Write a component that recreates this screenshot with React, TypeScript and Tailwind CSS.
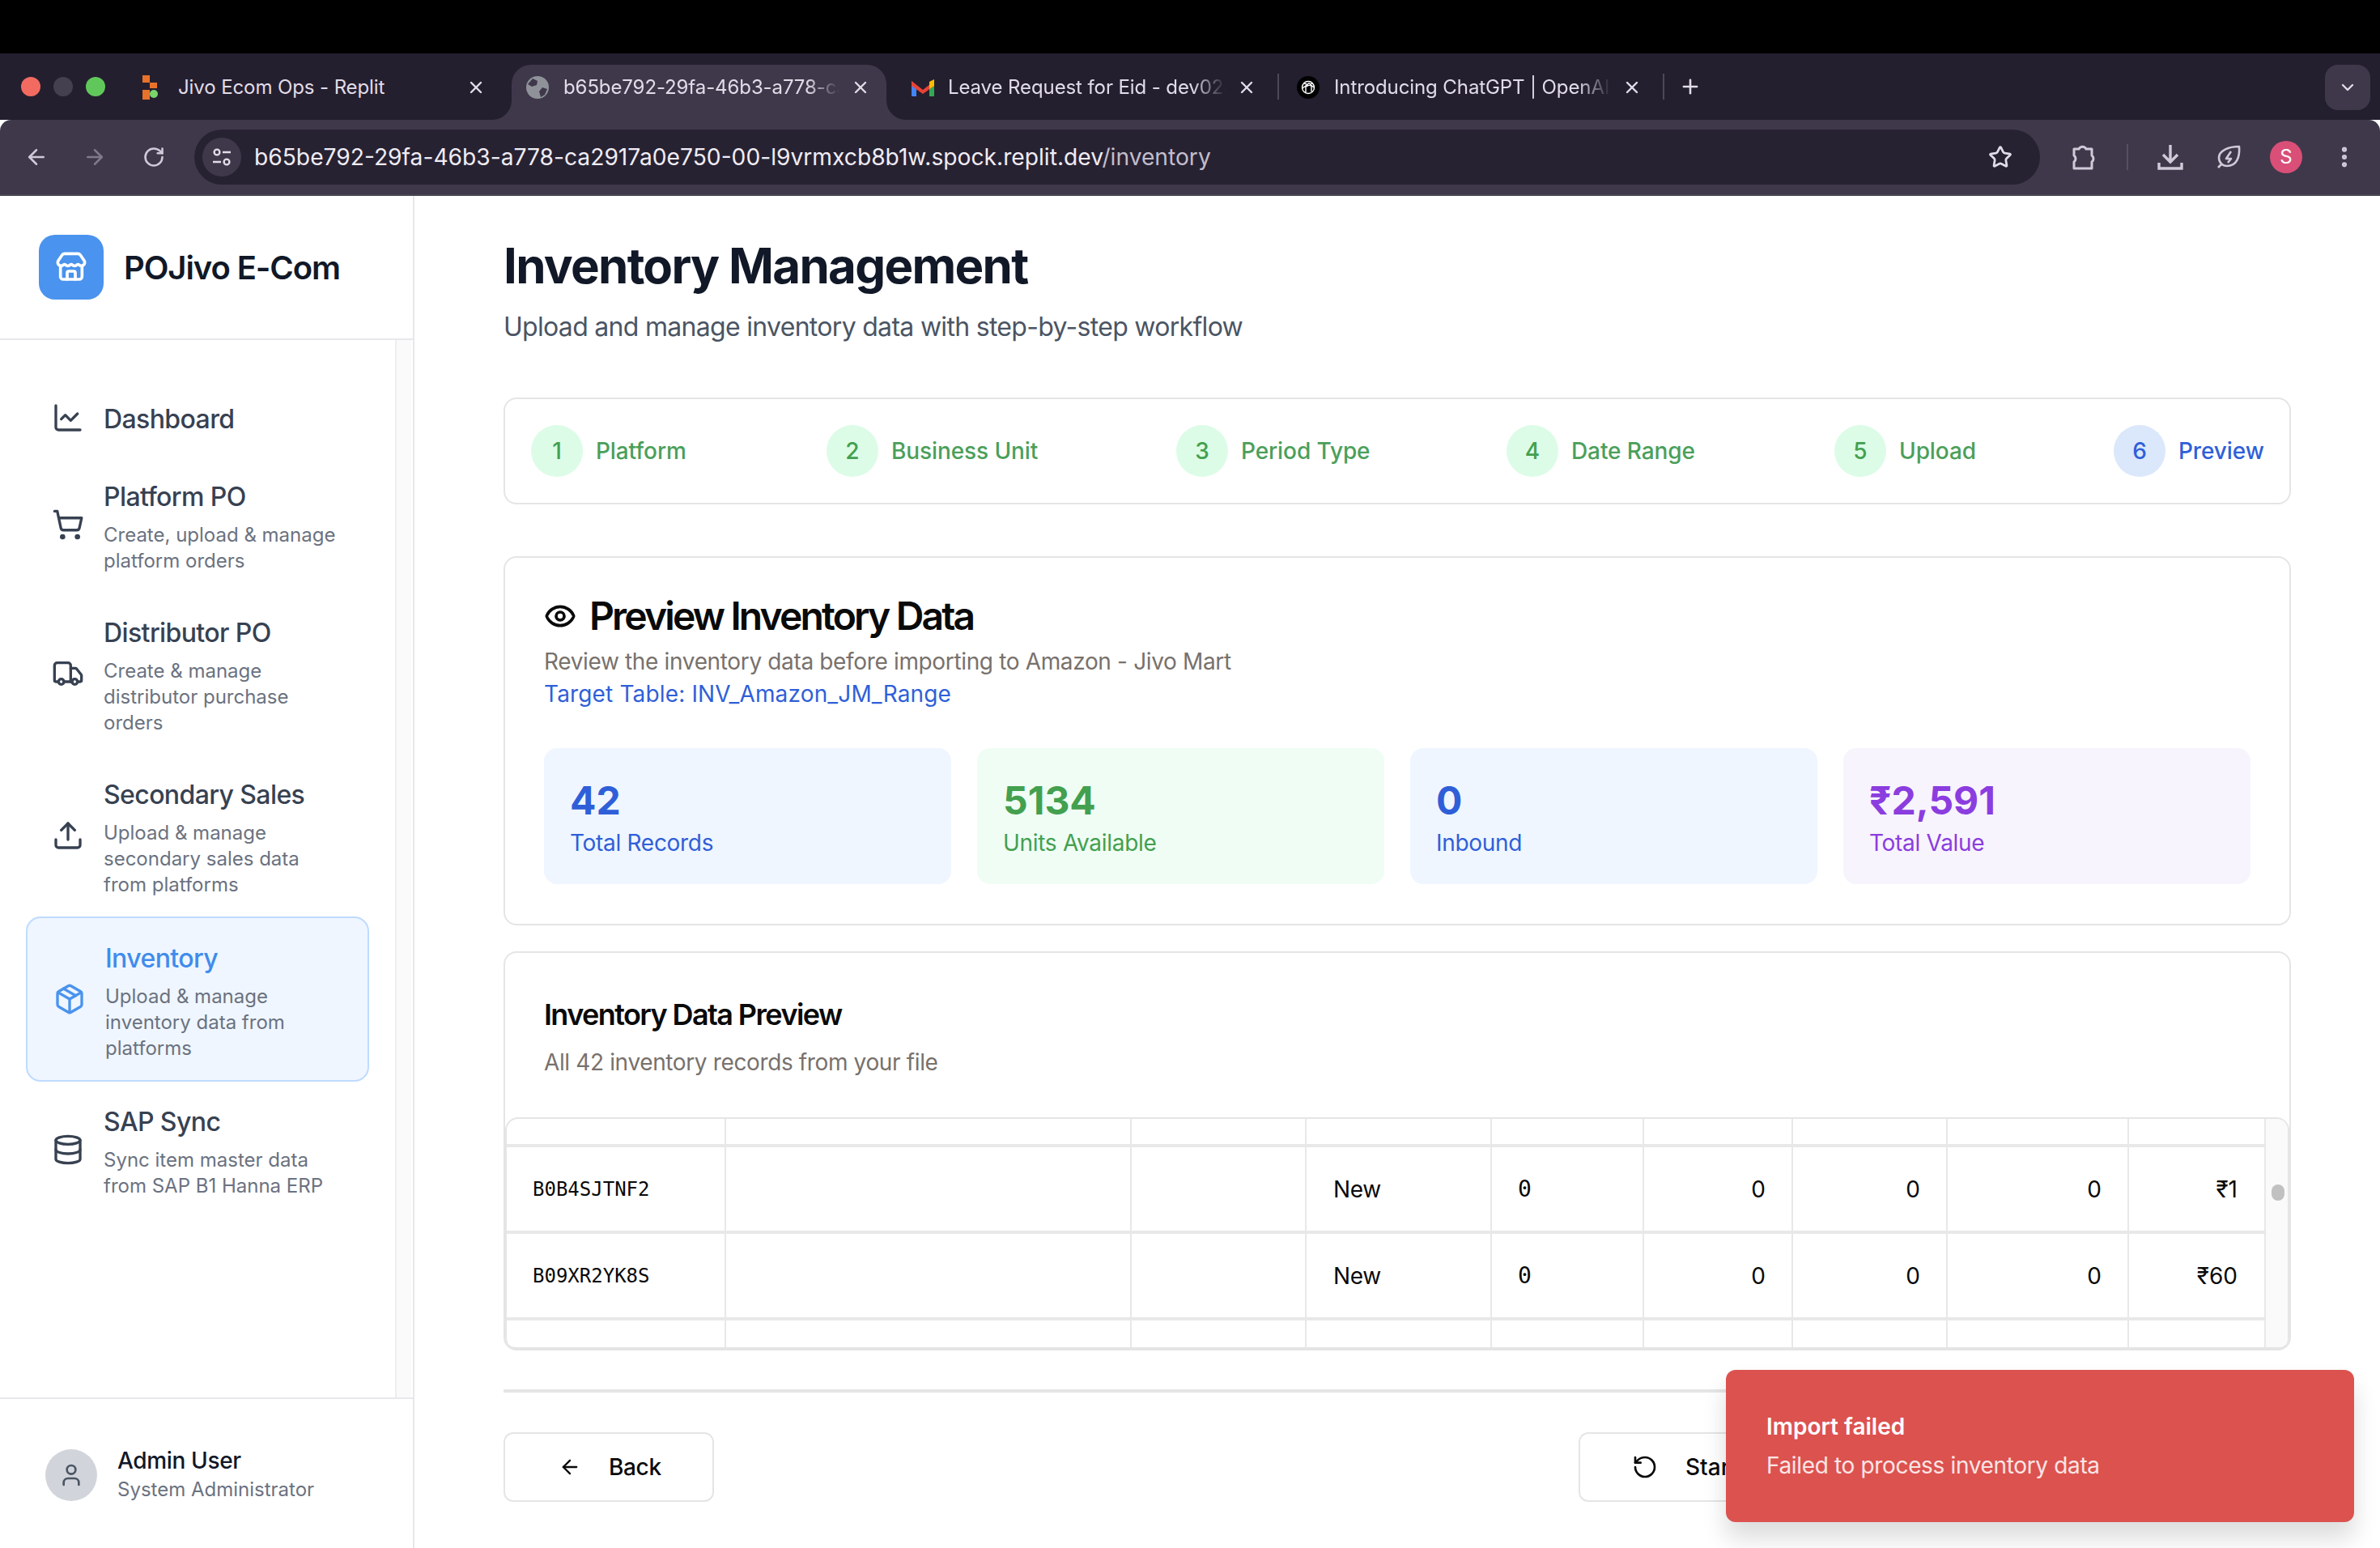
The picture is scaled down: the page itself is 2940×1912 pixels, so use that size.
import {
  ArrowLeft,
  ArrowRight,
  ChartLine,
  ChevronDown,
  Database,
  EllipsisVertical,
  Eye,
  Package,
  Plus,
  RotateCcw,
  RotateCw,
  ShoppingCart,
  Star,
  Store,
  Truck,
  Upload,
  User,
  X,
} from 'lucide-react';

const navItems = [
  { title: 'Dashboard', desc: '', icon: ChartLine },
  { title: 'Platform PO', desc: 'Create, upload & manage platform orders', icon: ShoppingCart },
  { title: 'Distributor PO', desc: 'Create & manage distributor purchase orders', icon: Truck },
  { title: 'Secondary Sales', desc: 'Upload & manage secondary sales data from platforms', icon: Upload },
  { title: 'Inventory', desc: 'Upload & manage inventory data from platforms', icon: Package, active: true },
  { title: 'SAP Sync', desc: 'Sync item master data from SAP B1 Hanna ERP', icon: Database },
];

const steps = [
  { n: 1, label: 'Platform', gap: 'w-[365px]' },
  { n: 2, label: 'Business Unit', gap: 'w-[432px]' },
  { n: 3, label: 'Period Type', gap: 'w-[408px]' },
  { n: 4, label: 'Date Range', gap: 'w-[405px]' },
  { n: 5, label: 'Upload', gap: 'w-[345px]' },
];

const stats = [
  { value: '42', label: 'Total Records', box: 'bg-[#eff6ff]', text: 'text-[#2f5fd8]' },
  { value: '5134', label: 'Units Available', box: 'bg-[#f0fdf4]', text: 'text-[#43a04f]' },
  { value: '0', label: 'Inbound', box: 'bg-[#eff6ff]', text: 'text-[#2f5fd8]' },
  { value: '₹2,591', label: 'Total Value', box: 'bg-[#f7f4fd]', text: 'text-[#8b3ddf]' },
];

const rows = [
  { asin: 'B0B4SJTNF2', price: '₹1' },
  { asin: 'B09XR2YK8S', price: '₹60' },
];

const cell = 'border-r-2 border-[#e8e8e8] p-0';

function ReplitIcon() {
  return (
    <svg width="24" height="30" viewBox="0 0 24 30">
      <rect x="2" y="0" width="9" height="9" fill="#e8722a" />
      <rect x="11" y="9" width="9" height="7" fill="#e8722a" />
      <rect x="2" y="18" width="9" height="12" fill="#e8722a" />
      <circle cx="16" cy="23" r="5" fill="#7ad66b" />
    </svg>
  );
}

function GlobeIcon() {
  return (
    <svg width="28" height="28" viewBox="0 0 28 28">
      <circle cx="14" cy="14" r="14" fill="#8f9399" />
      <path d="M8 3l6 3-1 5-6 2-5-3zM20 14l6 2-3 7-5 3-2-7z" fill="#3f384b" />
    </svg>
  );
}

function GmailIcon() {
  return (
    <svg width="30" height="24" viewBox="0 0 30 24">
      <path d="M1 4v18a1 1 0 0 0 1 1h5V10z" fill="#4285f4" />
      <path d="M29 4v18a1 1 0 0 1-1 1h-5V10z" fill="#34a853" />
      <path d="M1 4l14 11L29 4v6L15 20 1 10z" fill="#ea4335" />
      <path d="M23 5l6-3v8l-6 4z" fill="#fbbc04" />
    </svg>
  );
}

function GptIcon() {
  return (
    <svg width="28" height="28" viewBox="0 0 28 28">
      <circle cx="14" cy="14" r="14" fill="#000" />
      <g fill="none" stroke="#fff" strokeWidth="1.4">
        <circle cx="14" cy="14" r="7.5" />
        <path d="M9 9l9 3v7M19 9l-8 4v7M7 15l8-6 6 5" />
      </g>
    </svg>
  );
}

function Tab({ width, pad, icon, title, active, faded }: { width: string; pad: string; icon: React.ReactNode; title: string; active?: boolean; faded?: boolean }) {
  return (
    <div className={`relative flex h-[68px] shrink-0 items-center rounded-t-[24px] pb-[12px] ${width} ${pad} ${active ? 'bg-[#3f384b]' : ''}`}>
      <div className="flex w-[46px] shrink-0 items-center">{icon}</div>
      <div className={`min-w-0 flex-1 overflow-hidden whitespace-nowrap text-[24px] tracking-[-0.1px] text-[#e1dce8] ${faded ? '[mask-image:linear-gradient(to_right,black_88%,transparent)]' : ''}`}>{title}</div>
      <X size={24} strokeWidth={2.4} className="ml-[14px] shrink-0 text-[#e1dce8]" />
      {active && (
        <>
          <div className="absolute bottom-0 left-[-24px] h-[24px] w-[24px] bg-[#3f384b]">
            <div className="h-full w-full rounded-br-[24px] bg-[#241f2f]" />
          </div>
          <div className="absolute bottom-0 right-[-24px] h-[24px] w-[24px] bg-[#3f384b]">
            <div className="h-full w-full rounded-bl-[24px] bg-[#241f2f]" />
          </div>
        </>
      )}
    </div>
  );
}

function BrowserChrome() {
  return (
    <div className="shrink-0 font-['Inter',sans-serif]">
      <div className="h-[66px] bg-black" />
      <div className="flex h-[82px] items-end bg-[#241f2f]">
        <div className="flex h-[68px] w-[158px] shrink-0 items-start gap-[16px] pl-[26px] pt-[15px]">
          <div className="h-[24px] w-[24px] rounded-full bg-[#f36b60]" />
          <div className="h-[24px] w-[24px] rounded-full bg-[#45404f]" />
          <div className="h-[24px] w-[24px] rounded-full bg-[#60c85a]" />
        </div>
        <Tab width="w-[474px]" pad="pl-[16px] pr-[32px]" icon={<ReplitIcon />} title="Jivo Ecom Ops - Replit" />
        <Tab width="w-[463px]" pad="pl-[18px] pr-[20px]" icon={<GlobeIcon />} title="b65be792-29fa-46b3-a778-ca2917a0e750" active faded />
        <div className="w-[10px] shrink-0" />
        <Tab width="w-[473px]" pad="pl-[20px] pr-[26px]" icon={<GmailIcon />} title="Leave Request for Eid - dev02@jivo" faded />
        <div className="mb-[25px] h-[32px] w-[2px] shrink-0 bg-[#4e4858]" />
        <Tab width="w-[474px]" pad="pl-[22px] pr-[26px]" icon={<GptIcon />} title="Introducing ChatGPT | OpenAI" faded />
        <div className="mb-[25px] h-[32px] w-[2px] shrink-0 bg-[#4e4858]" />
        <div className="mb-[27px] ml-[18px]">
          <Plus size={28} strokeWidth={2.2} className="text-[#e1dce8]" />
        </div>
        <div className="flex-1" />
        <div className="mb-[12px] mr-[12px] flex h-[56px] w-[56px] items-center justify-center rounded-[16px] bg-[#3f384b]">
          <ChevronDown size={24} strokeWidth={2.4} className="text-[#e1dce8]" />
        </div>
      </div>
      <div className="flex h-[92px] items-center rounded-t-[14px] bg-[#3f384b] pl-[30px]">
        <ArrowLeft size={30} strokeWidth={2} className="shrink-0 text-[#cfc9d8]" />
        <ArrowRight size={30} strokeWidth={2} className="ml-[42px] shrink-0 text-[#7f7989]" />
        <RotateCw size={28} strokeWidth={2.2} className="ml-[44px] shrink-0 text-[#cfc9d8]" />
        <div className="ml-[36px] flex h-[68px] w-[2280px] shrink-0 items-center rounded-full bg-[#272232] pl-[10px] pr-[34px]">
          <div className="flex h-[48px] w-[48px] shrink-0 items-center justify-center rounded-full bg-[#3f384b]">
            <svg width="26" height="26" viewBox="0 0 26 26" fill="none" stroke="#e1dce8" strokeWidth="2.4">
              <circle cx="7" cy="7" r="3.4" />
              <path d="M14 7h10M2 19h10" />
              <circle cx="19" cy="19" r="3.4" />
            </svg>
          </div>
          <div className="ml-[16px] whitespace-nowrap text-[28.2px] text-[#f0ecf4]">
            b65be792-29fa-46b3-a778-ca2917a0e750-00-l9vrmxcb8b1w.spock.replit.dev<span className="text-[#c2bdcb]">/inventory</span>
          </div>
          <div className="flex-1" />
          <Star size={30} strokeWidth={2.2} className="shrink-0 text-[#e1dce8]" />
        </div>
        <svg width="34" height="34" viewBox="0 0 34 34" fill="none" stroke="#cfc9d8" strokeWidth="3" strokeLinejoin="round" className="ml-[36px] shrink-0">
          <path d="M6 7h6a5 5 0 0 1 9 0h7v8a5 5 0 0 1 0 8v8H6v-8a5 5 0 0 0 0-8z" />
        </svg>
        <div className="ml-[37px] h-[32px] w-[2px] shrink-0 bg-[#56505f]" />
        <svg width="34" height="34" viewBox="0 0 34 34" fill="none" stroke="#cfc9d8" strokeWidth="3.4" className="ml-[35px] shrink-0">
          <path d="M17 2v21M8 14l9 9 9-9M3 24v7h28v-7" />
        </svg>
        <svg width="34" height="34" viewBox="0 0 34 34" fill="none" stroke="#cfc9d8" strokeWidth="2.6" strokeLinejoin="round" className="ml-[38px] shrink-0">
          <path d="M30 4c1 13-3 24-15 24a10 10 0 0 1-10-10C5 9 17 4 30 4z" />
          <path d="M8 26l-4 4" />
          <path d="M20 10l-6 9h6l-4 5" />
        </svg>
        <div className="ml-[34px] flex h-[40px] w-[40px] shrink-0 items-center justify-center rounded-full bg-[#d94f78] text-[24px] text-white">S</div>
        <EllipsisVertical size={32} strokeWidth={2.6} className="ml-[36px] shrink-0 text-[#cfc9d8]" />
      </div>
      <div className="h-[2px] bg-[#48464f]" />
    </div>
  );
}

function Sidebar() {
  return (
    <aside className="flex w-[512px] shrink-0 flex-col border-r-2 border-[#e8e8ec] bg-white">
      <div className="flex h-[178px] shrink-0 items-center gap-[25px] border-b-2 border-[#e8e8ec] pl-[48px]">
        <div className="flex h-[80px] w-[80px] items-center justify-center rounded-[20px] bg-[#4a93ee]">
          <Store size={40} strokeWidth={2.2} className="text-white" />
        </div>
        <div className="pt-[2px] text-[40px] font-semibold tracking-[-1.1px] text-[#111827]">POJivo E-Com</div>
      </div>
      <div className="flex min-h-0 flex-1">
        <nav className="w-[488px] shrink-0 px-[32px] pt-[48px]">
          {navItems.map((item) => {
            const Icon = item.icon;
            return (
              <div
                key={item.title}
                className={`flex items-center gap-[24px] rounded-[18px] px-[32px] py-[24px] ${item.active ? 'border-2 border-[#bfdbfe] bg-[#eff6ff]' : ''}`}
              >
                <Icon size={40} strokeWidth={2} className={`shrink-0 ${item.active ? 'text-[#4a93ee]' : 'text-[#374151]'}`} />
                <div className="w-[300px]">
                  <div className={`translate-y-[2px] text-[32px] font-medium leading-[48px] tracking-[-0.6px] ${item.active ? 'text-[#3f8cec]' : 'text-[#374151]'}`}>{item.title}</div>
                  {item.desc && <div className="mt-[8px] translate-y-[1px] text-[24px] leading-[32px] text-[#6b7280]">{item.desc}</div>}
                </div>
              </div>
            );
          })}
        </nav>
        <div className="w-[20px] shrink-0 border-l-2 border-[#eeeeee] bg-[#fafafa]" />
      </div>
      <div className="flex h-[186px] shrink-0 items-center gap-[25px] border-t-2 border-[#e8e8ec] pl-[56px] pt-[4px]">
        <div className="flex h-[64px] w-[64px] items-center justify-center rounded-full bg-[#d1d5db]">
          <User size={32} strokeWidth={2} className="text-[#4b5563]" />
        </div>
        <div>
          <div className="text-[28px] font-medium leading-[36px] tracking-[-0.35px] text-[#111827]">Admin User</div>
          <div className="text-[24px] leading-[36px] text-[#6b7280]">System Administrator</div>
        </div>
      </div>
    </aside>
  );
}

function Stepper() {
  return (
    <div className="flex h-[132px] items-center rounded-[16px] border-2 border-[#e5e5e5] pl-[32px] pr-[32px]">
      {steps.map((s) => (
        <div key={s.n} className={`flex shrink-0 items-center gap-[16px] ${s.gap}`}>
          <div className="flex h-[64px] w-[64px] items-center justify-center rounded-full bg-[#dcfce7] text-[28px] font-medium text-[#43a04f]">{s.n}</div>
          <div className="text-[28px] font-medium tracking-[-0.1px] text-[#4b9f5a]">{s.label}</div>
        </div>
      ))}
      <div className="flex shrink-0 items-center gap-[16px]">
        <div className="flex h-[64px] w-[64px] items-center justify-center rounded-full bg-[#dbe7fb] text-[28px] font-medium text-[#2f5fd8]">6</div>
        <div className="text-[28px] font-medium tracking-[-0.1px] text-[#2f5fd8]">Preview</div>
      </div>
    </div>
  );
}

function PreviewCard() {
  return (
    <div className="mt-[64px] h-[456px] rounded-[16px] border-2 border-[#e5e5e5] px-[48px] pt-[44px]">
      <div className="flex h-[56px] items-center gap-[16px]">
        <Eye size={40} strokeWidth={2.2} className="text-[#0a0a0a]" />
        <div className="text-[48px] font-semibold tracking-[-2.85px] text-[#0a0a0a]">Preview Inventory Data</div>
      </div>
      <div className="mt-[8px] text-[28px] leading-[40px] tracking-[-0.35px] text-[#78716c]">Review the inventory data before importing to Amazon - Jivo Mart</div>
      <div className="text-[28px] leading-[40px] tracking-[0.15px] text-[#2f5fd8]">Target Table: INV_Amazon_JM_Range</div>
      <div className="mt-[47px] grid grid-cols-4 gap-[32px]">
        {stats.map((s) => (
          <div key={s.label} className={`h-[168px] rounded-[16px] px-[32px] pt-[33px] ${s.box}`}>
            <div className={`text-[48px] font-bold leading-[64px] ${s.text}`}>{s.value}</div>
            <div className={`text-[28px] leading-[40px] tracking-[-0.3px] ${s.text}`}>{s.label}</div>
          </div>
        ))}
      </div>
    </div>
  );
}

function TableCard() {
  return (
    <div className="mt-[32px] h-[493px] overflow-hidden rounded-[16px] border-2 border-b-4 border-[#e5e5e5]">
      <div className="px-[48px] pt-[52px]">
        <div className="text-[36px] font-semibold leading-[48px] tracking-[-1.6px] text-[#0a0a0a]">Inventory Data Preview</div>
        <div className="mt-[15px] text-[28px] leading-[40px] tracking-[-0.37px] text-[#78716c]">All 42 inventory records from your file</div>
      </div>
      <div className="mt-[48px] flex h-[288px] overflow-hidden rounded-[16px] border-2 border-b-0 border-[#e5e5e5]">
        <table className="w-[2172px] shrink-0 table-fixed border-collapse">
          <colgroup>
            <col className="w-[270px]" />
            <col className="w-[501px]" />
            <col className="w-[216px]" />
            <col className="w-[229px]" />
            <col className="w-[188px]" />
            <col className="w-[184px]" />
            <col className="w-[191px]" />
            <col className="w-[224px]" />
            <col className="w-[169px]" />
          </colgroup>
          <tbody className="text-[28px] text-[#0a0a0a]">
            <tr className="h-[33px] border-b-4 border-[#e8e8e8]">
              {Array.from({ length: 9 }, (_, i) => (
                <td key={i} className={cell} />
              ))}
            </tr>
            {rows.map((r) => (
              <tr key={r.asin} className="h-[107px] border-b-4 border-[#e8e8e8]">
                <td className={`${cell} pl-[32px] font-['DejaVu_Sans_Mono',monospace] text-[24px]`}>{r.asin}</td>
                <td className={cell} />
                <td className={cell} />
                <td className={`${cell} pl-[33px] tracking-[-0.35px]`}>New</td>
                <td className={`${cell} pl-[32px] font-['DejaVu_Sans_Mono',monospace] text-[28px]`}>0</td>
                <td className={`${cell} pr-[32px] text-right`}>0</td>
                <td className={`${cell} pr-[32px] text-right`}>0</td>
                <td className={`${cell} pr-[32px] text-right`}>0</td>
                <td className={`${cell} pr-[33px] text-right`}>{r.price}</td>
              </tr>
            ))}
            <tr className="h-[42px]">
              {Array.from({ length: 9 }, (_, i) => (
                <td key={i} className={cell} />
              ))}
            </tr>
          </tbody>
        </table>
        <div className="flex-1 bg-[#fafafa] pl-[7px] pt-[81px]">
          <div className="h-[20px] w-[16px] rounded-full bg-[#c1c1c1]" />
        </div>
      </div>
    </div>
  );
}

export default function App() {
  return (
    <div className="relative flex h-[1912px] w-[2940px] flex-col overflow-hidden bg-white font-['Inter',sans-serif]">
      <BrowserChrome />
      <div className="flex min-h-0 flex-1">
        <Sidebar />
        <main className="min-w-0 flex-1 px-[110px]">
          <h1 className="mt-[50px] text-[60px] font-bold leading-[72px] tracking-[-1.7px] text-[#111827]">Inventory Management</h1>
          <p className="mt-[16px] text-[32px] leading-[48px] tracking-[-0.7px] text-[#4b5563]">Upload and manage inventory data with step-by-step workflow</p>
          <div className="mt-[63px]">
            <Stepper />
            <PreviewCard />
            <TableCard />
          </div>
          <div className="mt-[48px] h-[4px] bg-[#e5e5e5]" />
          <div className="mt-[49px] flex">
            <button className="flex h-[86px] w-[260px] items-center gap-[34px] rounded-[12px] border-2 border-[#e5e5e5] pl-[66px] text-[28px] font-medium tracking-[-0.35px] text-[#0a0a0a]">
              <ArrowLeft size={28} strokeWidth={2} />
              Back
            </button>
            <button className="ml-[1068px] flex h-[86px] w-[300px] items-center gap-[34px] rounded-[12px] border-2 border-[#e5e5e5] pl-[64px] text-[28px] font-medium text-[#0a0a0a]">
              <RotateCcw size={32} strokeWidth={2} />
              Start Over
            </button>
          </div>
        </main>
      </div>
      <div className="absolute left-[2132px] top-[1692px] flex h-[188px] w-[776px] flex-col justify-center rounded-[12px] bg-[#dc524f] px-[50px] shadow-[0_20px_30px_rgba(0,0,0,0.14)]">
        <div className="text-[28px] font-semibold leading-[40px] text-white">Import failed</div>
        <div className="mt-[8px] text-[28px] leading-[40px] tracking-[-0.35px] text-white/85">Failed to process inventory data</div>
      </div>
    </div>
  );
}
